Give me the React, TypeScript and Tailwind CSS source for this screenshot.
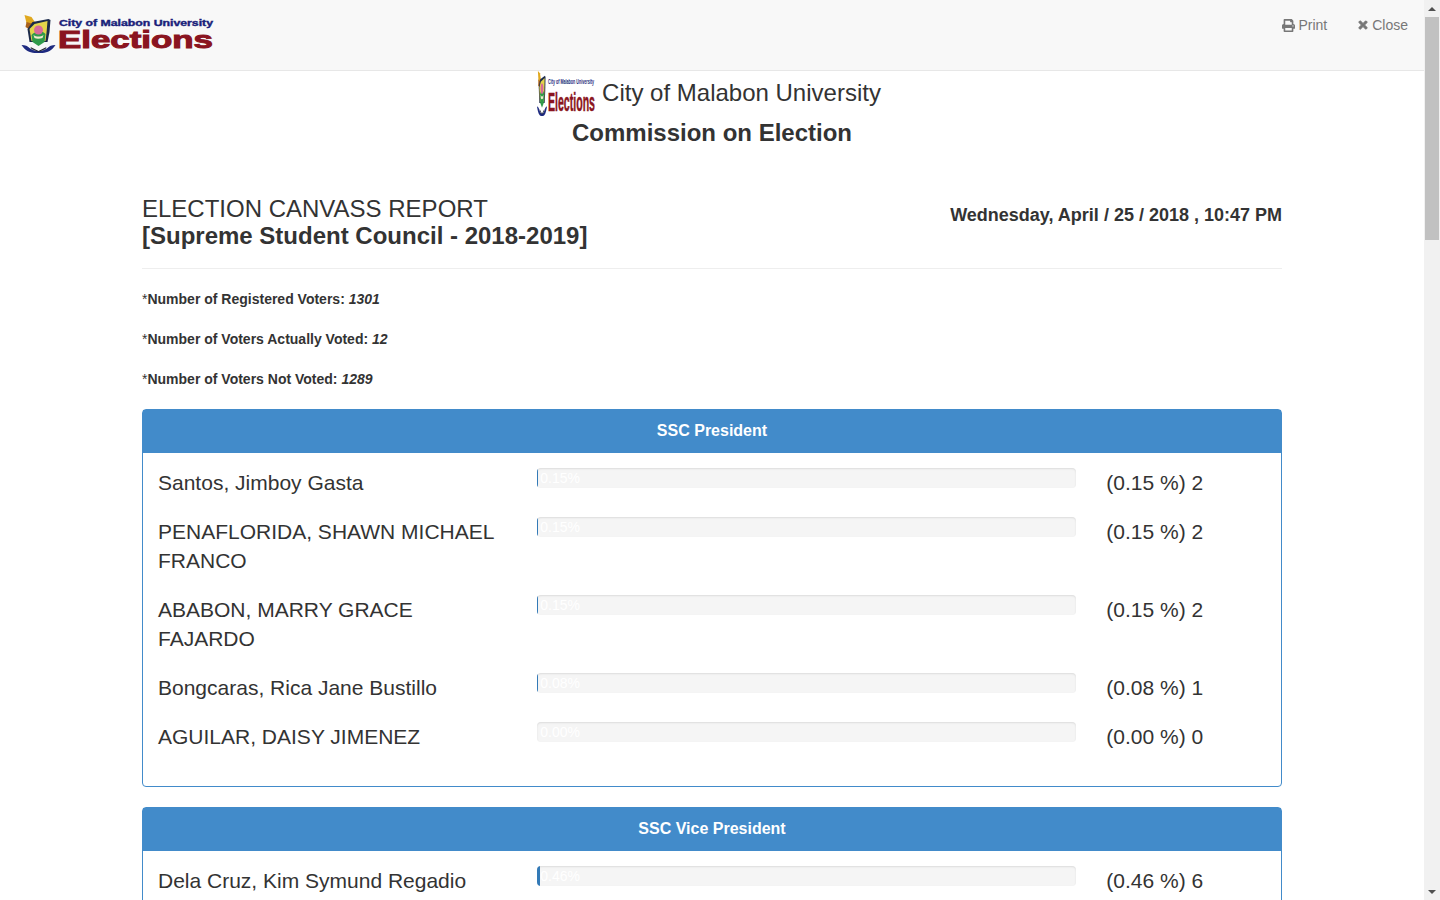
import { FaPrint, FaTimes } from "react-icons/fa";

const sans = "font-['Liberation_Sans',Arial,sans-serif]";

type Row = { name: string; pct: string; count: number; w: number };

const president: Row[] = [
  { name: "Santos, Jimboy Gasta", pct: "0.15", count: 2, w: 0.15 },
  { name: "PENAFLORIDA, SHAWN MICHAEL FRANCO", pct: "0.15", count: 2, w: 0.15 },
  { name: "ABABON, MARRY GRACE FAJARDO", pct: "0.15", count: 2, w: 0.15 },
  { name: "Bongcaras, Rica Jane Bustillo", pct: "0.08", count: 1, w: 0.08 },
  { name: "AGUILAR, DAISY JIMENEZ", pct: "0.00", count: 0, w: 0 },
];

const vice: Row[] = [{ name: "Dela Cruz, Kim Symund Regadio", pct: "0.46", count: 6, w: 0.46 }];

function EmblemShapes() {
  return (
    <>
      <path d="M3 0l7 2 4 6-4 3-5-3z" fill="#e0a81f" />
      <path d="M5 7l-1 5 5 3 3-6z" fill="#a8611c" />
      <path d="M11 7l16-3 2 1-1 12-2 10H8L6 14z" fill="#1c2a4a" />
      <path d="M13 9l13-3-1 12-1 8H10L8 14z" fill="#e3d44a" />
      <path d="M10 20c3-4 11-5 14-1l-1 8-6 4-6-4z" fill="#2f9a4a" />
      <circle cx="17" cy="15" r="4.5" fill="#d76a9a" />
      <path d="M12 20c3 2 7 2 10 0l-1 3c-3 1-6 1-8 0z" fill="#f3ead0" />
      <path d="M0 30c4 0 6 1 8 3 5 4 13 4 18 0 2-2 4-3 8-3-2 3-4 5-6 6-6 3-16 3-22 0-2-1-4-3-6-6z" fill="#1e2a80" />
      <path d="M9 32l8 4 8-4-1 2-7 3-7-3z" fill="#20242e" />
    </>
  );
}

function Progress({ pct, w }: { pct: string; w: number }) {
  return (
    <div className="relative mx-[15px] h-5 overflow-hidden rounded bg-[#f5f5f5] shadow-[inset_0_1px_2px_rgba(0,0,0,0.1)]">
      <div className="flex h-full bg-[#337ab7]" style={{ width: `${w}%` }}>
        <span className="whitespace-nowrap pl-[3px] text-sm leading-5 text-white">{pct}%</span>
      </div>
    </div>
  );
}

function Panel({ title, rows }: { title: string; rows: Row[] }) {
  return (
    <section className="mb-5 rounded border border-[#428bca]">
      <h2 className="flex h-[43px] items-center justify-center bg-[#428bca] pb-[2px] text-base font-bold text-white">{title}</h2>
      <div className="px-0 pb-[15px] pt-[15px]">
        {rows.map((r) => (
          <div key={r.name} className="mb-5 grid grid-cols-[379.33px_569px_1fr]">
            <div className="px-[15px] text-[21px] leading-[29px]">{r.name}</div>
            <Progress pct={r.pct} w={r.w} />
            <div className="px-[15px] text-[21px] leading-[29px]">
              ({r.pct} %) {r.count}
            </div>
          </div>
        ))}
      </div>
    </section>
  );
}

function Stat({ label, value }: { label: string; value: string }) {
  return (
    <p className="mb-5 text-sm leading-5">
      *<b>{label}: </b>
      <b className="italic">{value}</b>
    </p>
  );
}

export default function App() {
  return (
    <div className={`flex h-screen overflow-hidden bg-white text-[#333] ${sans}`}>
      <div className="min-w-0 flex-1 overflow-hidden">
        <nav className="flex h-[71px] items-start justify-between border-b border-[#e7e7e7] bg-[#f8f8f8]">
          <div className="flex pl-[21px] pt-[15px]">
            <svg viewBox="0 0 34 38" className="h-[38px] w-[35px]" aria-hidden="true">
              <EmblemShapes />
            </svg>
            <svg viewBox="0 0 158 36" className="ml-[2px] h-9 w-[158px]">
              <text x="1" y="11" textLength="154" lengthAdjust="spacingAndGlyphs" fontSize="9" fontWeight="700" fill="#1a1f7a" stroke="#1a1f7a" strokeWidth="0.4">
                City of Malabon University
              </text>
              <text x="0" y="33" textLength="155" lengthAdjust="spacingAndGlyphs" fontSize="24" fontWeight="700" fill="#8a1420" stroke="#8a1420" strokeWidth="1">
                Elections
              </text>
            </svg>
          </div>
          <div className="flex gap-[30px] pr-4 pt-[15px] text-sm leading-5 text-[#777]">
            <span className="flex items-center gap-[3px]"><FaPrint className="h-[13px] w-[13px]" /> Print</span>
            <span className="flex items-center gap-[3px]"><FaTimes className="h-3 w-3 stroke-[#777] stroke-[40px]" /> Close</span>
          </div>
        </nav>

        <main className="mx-auto w-[1140px]">
          <div className="flex h-[45px] items-center justify-center gap-[7px] pr-[6px]">
            <svg viewBox="0 0 58 45" className="h-[45px] w-[58px]">
              <svg x="0" y="0" width="10" height="45" viewBox="0 0 34 38" preserveAspectRatio="none">
                <EmblemShapes />
              </svg>
              <text x="11" y="13" textLength="46" lengthAdjust="spacingAndGlyphs" fontSize="8" fontWeight="700" fill="#1a1f7a">City of Malabon University</text>
              <text x="11" y="40" textLength="47" lengthAdjust="spacingAndGlyphs" fontSize="25" fontWeight="700" fill="#8a1420" stroke="#8a1420" strokeWidth="0.5">Elections</text>
            </svg>
            <span className="-mt-[2px] text-2xl leading-[26px]">City of Malabon University</span>
          </div>
          <h1 className="mt-1 text-center text-2xl font-bold leading-[26px]">Commission on Election</h1>

          <header className="mt-[49px] flex justify-between">
            <div className="text-2xl leading-[27px]">
              <div>ELECTION CANVASS REPORT</div>
              <div className="font-bold">[Supreme Student Council - 2018-2019]</div>
            </div>
            <div className="mt-[10px] text-lg font-bold leading-5">Wednesday, April / 25 / 2018 , 10:47 PM</div>
          </header>
          <hr className="mb-5 mt-[19px] border-[#eee]" />

          <Stat label="Number of Registered Voters" value="1301" />
          <Stat label="Number of Voters Actually Voted" value="12" />
          <Stat label="Number of Voters Not Voted" value="1289" />

          <Panel title="SSC President" rows={president} />
          <Panel title="SSC Vice President" rows={vice} />
        </main>
      </div>

      <div className="flex w-4 shrink-0 flex-col bg-[#f1f1f1]">
        <div className="flex h-[17px] items-center justify-center">
          <div className="h-0 w-0 border-x-4 border-b-4 border-x-transparent border-b-[#505050]" />
        </div>
        <div className="mx-[1px] h-[223px] bg-[#c1c1c1]" />
        <div className="flex-1" />
        <div className="flex h-[17px] items-center justify-center">
          <div className="h-0 w-0 border-x-4 border-t-4 border-x-transparent border-t-[#505050]" />
        </div>
      </div>
    </div>
  );
}
